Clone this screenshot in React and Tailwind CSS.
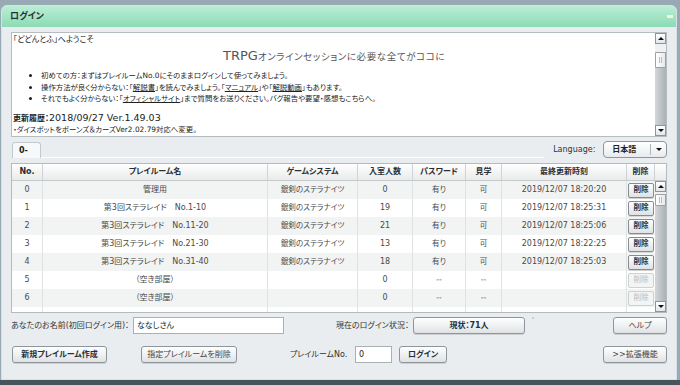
import React from "react";

const rows = [
  ["0", "管理用", "銀剣のステラナイツ", "0", "有り", "可", "2019/12/07 18:20:20", true],
  ["1", "第3回ステラレイド\u3000No.1-10", "銀剣のステラナイツ", "19", "有り", "可", "2019/12/07 18:25:31", true],
  ["2", "第3回ステラレイド\u3000No.11-20", "銀剣のステラナイツ", "21", "有り", "可", "2019/12/07 18:25:06", true],
  ["3", "第3回ステラレイド\u3000No.21-30", "銀剣のステラナイツ", "13", "有り", "可", "2019/12/07 18:22:25", true],
  ["4", "第3回ステラレイド\u3000No.31-40", "銀剣のステラナイツ", "18", "有り", "可", "2019/12/07 18:25:03", true],
  ["5", "（空き部屋）", "", "0", "--", "--", "", false],
  ["6", "（空き部屋）", "", "0", "--", "--", "", false],
  ["", "", "", "", "", "", "", null],
];

const colW = ["w-[31px]", "w-[225px]", "w-[90px]", "w-[55px]", "w-[53px]", "w-[36px]", "w-[125px]", "w-[28px]"];
const headers = ["No.", "プレイルーム名", "ゲームシステム", "入室人数", "パスワード", "見学", "最終更新時刻", "削除"];

function TriUp() {
  return <div className="w-0 h-0 border-l-[3px] border-r-[3px] border-b-[3px] border-l-transparent border-r-transparent border-b-[#111]" />;
}
function TriDown() {
  return <div className="w-0 h-0 border-l-[3px] border-r-[3px] border-t-[3px] border-l-transparent border-r-transparent border-t-[#111]" />;
}

function VScroll({ lightTop, thumbH }) {
  return (
    <div className="w-[11px] h-full flex flex-col bg-gradient-to-r from-[#d3d7d9] to-[#aab1b5]">
      <div className="h-[11px] shrink-0 bg-gradient-to-b from-white to-[#e3e6e8] border border-[#8d959a] flex items-center justify-center">
        <TriUp />
      </div>
      <div className={`${lightTop} shrink-0 bg-[#eef0f1]`} />
      <div className={`${thumbH} shrink-0 bg-gradient-to-r from-white to-[#e6e9eb] border border-[#9aa2a7] rounded-[1px] flex items-center justify-center`}>
        <div className="w-[3px] h-[6px] border-l border-r border-[#b8bec2]" />
      </div>
      <div className="flex-1" />
      <div className="h-[11px] shrink-0 bg-gradient-to-b from-white to-[#e3e6e8] border border-[#8d959a] flex items-center justify-center">
        <TriDown />
      </div>
    </div>
  );
}

function Btn({ className = "", children, bold = false, muted = false }) {
  return (
    <div
      className={`h-[17px] flex items-center justify-center rounded-[3px] border border-[#8e969b] bg-gradient-to-b from-white to-[#dfe2e4] shadow-[0_1px_0_rgba(0,0,0,0.12)] text-[8px] ${bold ? "font-bold text-[#23303a]" : muted ? "text-[#444]" : "text-[#333]"} ${className}`}
    >
      {children}
    </div>
  );
}

function Bullet({ children }) {
  return (
    <li className="flex items-center">
      <span className="w-[28px] shrink-0 flex justify-end pr-[9px]">
        <span className="w-[3px] h-[3px] rounded-full bg-[#222]" />
      </span>
      <span>{children}</span>
    </li>
  );
}

export default function App() {
  return (
    <div className="w-[680px] h-[385px] bg-[#97a9b3] pt-[5px] flex flex-col font-['DejaVu_Sans','Noto_Sans_CJK_JP',sans-serif] [font-feature-settings:'palt'] overflow-hidden">
      <div className="ml-[1px] w-[676px] flex-1 flex flex-col rounded-t-[6px] border border-[#d9e1e5] bg-[#e9edef] overflow-hidden">
        {/* Title bar */}
        <div className="h-[21px] shrink-0 bg-gradient-to-b from-[#b9eed5] to-[#8cdbb5] flex items-center pl-[8px] pr-[3px]">
          <span className="text-[9px] font-bold text-[#26332d]">ログイン</span>
          <div className="ml-auto w-[6px] h-[3px] bg-[#f1f6d8]" />
        </div>

        <div className="flex-1 flex flex-col px-[9px]">
          {/* Text area */}
          <div className="mt-[5px] h-[105px] shrink-0 border border-[#b5bdc1] bg-white flex">
            <div className="flex-1 pl-[1px] pt-[1px] text-[#222] overflow-hidden">
              <div className="text-[8px] leading-[11px]">「どどんとふ」へようこそ</div>
              <div className="mt-[2px] text-center text-[#555] leading-[16px]">
                <span className="text-[13px]">TRPG</span>
                <span className="text-[9.5px] tracking-[0.6px]">オンラインセッションに必要な全てがココに</span>
              </div>
              <ul className="mt-[5px] text-[7.4px] leading-[11.5px]">
                <Bullet>初めての方：まずはプレイルームNo.0にそのままログインして使ってみましょう。</Bullet>
                <Bullet>操作方法が良く分からない：「<u>解説書</u>」を読んでみましょう。「<u>マニュアル</u>」や「<u>解説動画</u>」もあります。</Bullet>
                <Bullet>それでもよく分からない：「<u>オフィシャルサイト</u>」まで質問をお送りください。バグ報告や要望・感想もこちらへ。</Bullet>
              </ul>
              <div className="mt-[5px] leading-[12px]">
                <span className="text-[8px] font-bold">更新履歴：</span>
                <span className="text-[9.5px]">2018/09/27 Ver.1.49.03</span>
              </div>
              <div className="text-[7.4px] leading-[10px]">・ダイスボットをボーンズ＆カーズVer2.02.79対応へ変更。</div>
            </div>
            <div className="w-[11px] h-full">
              <VScroll lightTop="h-[8px]" thumbH="h-[16px]" />
            </div>
          </div>

          {/* Tab row */}
          <div className="mt-[4px] h-[17px] shrink-0 flex items-end">
            <div className="ml-[1px] w-[29px] h-[16px] rounded-t-[3px] border border-b-0 border-[#c3cacd] bg-[#f6f8f9] text-[8px] font-bold text-[#222] pl-[6px] flex items-center">0-</div>
            <div className="w-[506px] h-[1px] bg-white" />
            <div className="ml-[9px] self-center text-[8px] text-[#333]">Language:</div>
            <div className="ml-[8px] w-[64px] h-[17px] self-center rounded-[4px] border border-[#8e969b] bg-gradient-to-b from-white to-[#e8ebed] flex items-center">
              <span className="pl-[8px] text-[8px] font-bold text-[#222] flex-1">日本語</span>
              <div className="w-[1px] h-[11px] bg-[#b0b6ba]" />
              <div className="w-[15px] flex justify-center"><TriDown /></div>
            </div>
          </div>

          {/* Table */}
          <div className="mt-[5px] h-[150px] shrink-0 border border-[#b3bbbf] bg-white flex flex-col">
            <div className="h-[17px] shrink-0 flex border-b border-[#c4c9cc] bg-gradient-to-b from-white to-[#e9eaeb]">
              {headers.map((h, i) => (
                <div key={i} className={`${colW[i]} shrink-0 border-r border-[#cfd3d5] flex items-center justify-center text-[8px] font-bold text-[#2a2f33]`}>
                  {h}
                </div>
              ))}
              <div className="w-[11px]" />
            </div>
            <div className="flex-1 flex overflow-hidden">
              <div className="w-[643px] overflow-hidden">
                {rows.map((r, ri) => (
                  <div key={ri} className={`h-[18px] flex ${ri % 2 === 0 ? "bg-[#f2f3f3]" : "bg-white"}`}>
                    {r.slice(0, 7).map((c, ci) => (
                      <div
                        key={ci}
                        className={`${colW[ci]} shrink-0 border-r border-[#e0e3e4] flex items-center justify-center whitespace-pre text-[#4a4a4a] ${ci === 2 || ci === 4 || ci === 5 ? "text-[7.6px]" : "text-[8px]"}`}
                      >
                        {c}
                      </div>
                    ))}
                    <div className={`${colW[7]} shrink-0 flex items-center pl-[1px]`}>
                      {r[7] !== null && (
                        <div
                          className={`w-[26px] h-[15px] rounded-[2px] flex items-center justify-center text-[7.6px] ${
                            r[7]
                              ? "border border-[#858d92] bg-gradient-to-b from-white to-[#dfe2e4] font-bold text-[#24323c] shadow-[0_1px_0_rgba(0,0,0,0.15)]"
                              : "border border-[#cdd1d3] bg-[#f3f4f4] text-[#b9bcbe]"
                          }`}
                        >
                          削除
                        </div>
                      )}
                    </div>
                  </div>
                ))}
              </div>
              <VScroll lightTop="h-[2px]" thumbH="h-[12px]" />
            </div>
          </div>

          {/* Name row */}
          <div className="mt-[4px] h-[17px] shrink-0 flex items-center">
            <div className="w-[122px] text-[8px] text-[#333]">あなたのお名前(初回ログイン用)：</div>
            <div className="w-[151px] h-[17px] border border-[#a9b1b5] bg-white flex items-center pl-[3px] text-[8px] text-[#222]">ななしさん</div>
            <div className="ml-[52px] w-[77px] text-[8px] text-[#333]">現在のログイン状況：</div>
            <Btn className="w-[112px]" bold>現状：71人</Btn>
            <div className="ml-[7px] self-start w-[2px] h-[2px] bg-[#c9cdd0]" />
            <Btn className="ml-auto w-[54px]" muted>ヘルプ</Btn>
          </div>

          {/* Button row */}
          <div className="mt-[12px] h-[17px] shrink-0 flex items-center">
            <Btn className="ml-[1px] w-[95px]" bold>新規プレイルーム作成</Btn>
            <Btn className="ml-[34px] w-[96px]" muted>指定プレイルームを削除</Btn>
            <div className="ml-[53px] w-[65px] text-[8px] text-[#333]">プレイルームNo.</div>
            <div className="w-[37px] h-[17px] border border-[#a9b1b5] bg-white flex items-center pl-[3px] text-[8px] text-[#222]">0</div>
            <Btn className="ml-[7px] w-[48px]" bold>ログイン</Btn>
            <Btn className="ml-auto w-[64px]" muted>&gt;&gt;拡張機能</Btn>
          </div>
        </div>
      </div>
      <div className="h-[5px] shrink-0 bg-[#48545c]" />
    </div>
  );
}
